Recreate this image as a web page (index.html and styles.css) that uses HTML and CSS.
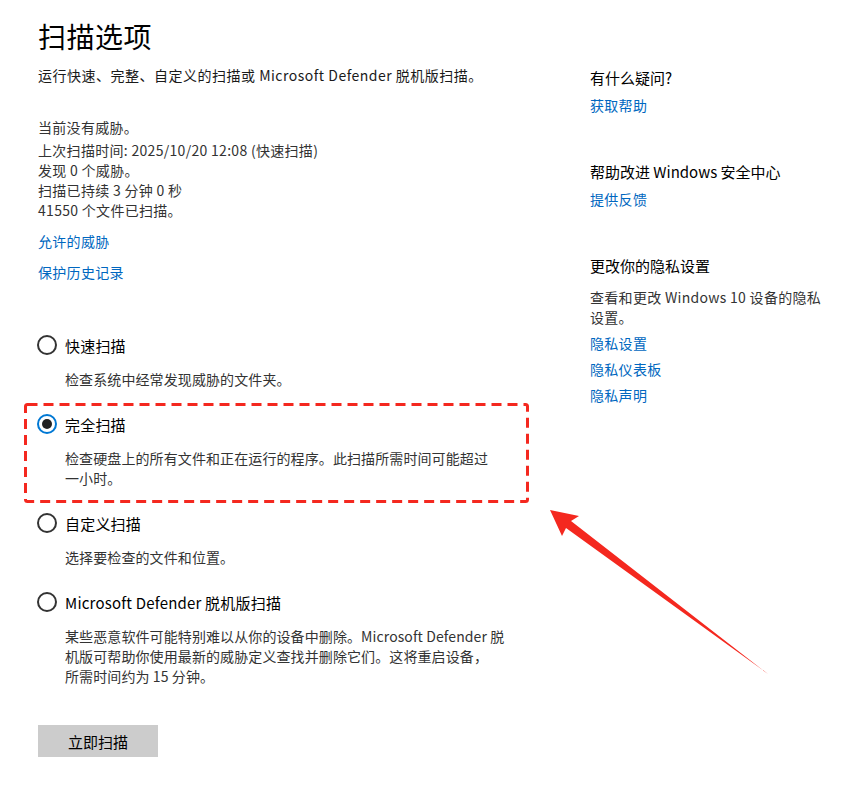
FILE: index.html
```html
<!DOCTYPE html>
<html lang="zh-CN">
<head>
<meta charset="utf-8">
<title>扫描选项</title>
<link rel="stylesheet" href="styles.css">
</head>
<body>
<div class="page">
  <main class="main">
    <h1 class="title">扫描选项</h1>
    <p class="subtitle">运行快速、完整、自定义的扫描或 Microsoft Defender 脱机版扫描。</p>

    <div class="status">
      <p class="status-first">当前没有威胁。</p>
      <p>上次扫描时间: 2025/10/20 12:08 (快速扫描)</p>
      <p>发现 0 个威胁。</p>
      <p>扫描已持续 3 分钟 0 秒</p>
      <p>41550 个文件已扫描。</p>
    </div>

    <div class="links">
      <a class="link" href="#">允许的威胁</a>
      <a class="link" href="#">保护历史记录</a>
    </div>

    <div class="options">
      <div class="option">
        <div class="option-row"><span class="radio"></span><span class="option-label">快速扫描</span></div>
        <p class="option-desc">检查系统中经常发现威胁的文件夹。</p>
      </div>
      <div class="option">
        <div class="option-row"><span class="radio radio-checked"></span><span class="option-label">完全扫描</span></div>
        <p class="option-desc">检查硬盘上的所有文件和正在运行的程序。此扫描所需时间可能超过<br>一小时。</p>
      </div>
      <div class="option">
        <div class="option-row"><span class="radio"></span><span class="option-label">自定义扫描</span></div>
        <p class="option-desc">选择要检查的文件和位置。</p>
      </div>
      <div class="option">
        <div class="option-row"><span class="radio"></span><span class="option-label">Microsoft Defender 脱机版扫描</span></div>
        <p class="option-desc">某些恶意软件可能特别难以从你的设备中删除。Microsoft Defender 脱<br>机版可帮助你使用最新的威胁定义查找并删除它们。这将重启设备，<br>所需时间约为 15 分钟。</p>
      </div>
    </div>

    <button class="scan-btn" type="button">立即扫描</button>
  </main>

  <aside class="side">
    <section class="side-block">
      <h2 class="side-title">有什么疑问?</h2>
      <a class="link" href="#">获取帮助</a>
    </section>
    <section class="side-block">
      <h2 class="side-title">帮助改进 Windows 安全中心</h2>
      <a class="link" href="#">提供反馈</a>
    </section>
    <section class="side-block">
      <h2 class="side-title">更改你的隐私设置</h2>
      <p class="side-text">查看和更改 Windows 10 设备的隐私设置。</p>
      <a class="link link-tight" href="#">隐私设置</a>
      <a class="link link-tight" href="#">隐私仪表板</a>
      <a class="link link-tight" href="#">隐私声明</a>
    </section>
  </aside>

  <svg class="annotation" width="842" height="786" viewBox="0 0 842 786" aria-hidden="true">
    <rect x="25.5" y="404.5" width="502" height="97" rx="2" ry="2" fill="none" stroke="#f4281f" stroke-width="3" stroke-dasharray="10 6"/>
    <polygon points="550,510 579,516 571,521 768,674 566,528 562,536" fill="#f4281f"/>
  </svg>
</div>
</body>
</html>
```

FILE: styles.css
```css
* { box-sizing: border-box; }

html, body {
  margin: 0;
  padding: 0;
  background: #ffffff;
}

body {
  font-family: "Noto Sans CJK SC", "Noto Sans", sans-serif;
  font-size: 14px;
  color: #000;
}

p, h1, h2 { margin: 0; font-weight: normal; }

.page {
  position: relative;
  width: 842px;
  height: 786px;
  display: flex;
  padding-left: 38px;
}

.main {
  width: 510px;
  padding-top: 16px;
  display: flex;
  flex-direction: column;
  align-items: flex-start;
}

.title {
  font-size: 28px;
  line-height: 40px;
  color: #000;
  letter-spacing: 0.5px;
}

.subtitle {
  margin-top: 9px;
  line-height: 20px;
  color: #1a1a1a;
  letter-spacing: 0.5px;
}

.status {
  margin-top: 32px;
  color: #333;
  line-height: 20px;
  letter-spacing: 0.3px;
}

.status-first { margin-bottom: 3px; }

.links {
  margin-top: 11px;
  display: flex;
  flex-direction: column;
  gap: 11px;
}

.link {
  display: block;
  color: #0067c0;
  text-decoration: none;
  line-height: 20px;
  letter-spacing: 0.3px;
}

.options {
  margin-top: 51px;
  display: flex;
  flex-direction: column;
  gap: 23px;
}

.option-row {
  display: flex;
  align-items: center;
  height: 24px;
  margin-left: -1px;
  gap: 8px;
}

.radio {
  width: 20px;
  height: 20px;
  border-radius: 50%;
  border: 2px solid #333;
  display: flex;
  align-items: center;
  justify-content: center;
  flex: none;
}

.radio-checked {
  border-color: #0078d4;
}

.radio-checked::after {
  content: "";
  width: 10px;
  height: 10px;
  border-radius: 50%;
  background: #222;
}

.option-label {
  font-size: 15px;
  color: #000;
  letter-spacing: 0.2px;
}

.option-desc {
  margin-top: 12px;
  margin-left: 27px;
  width: 470px;
  white-space: nowrap;
  line-height: 20px;
  color: #333;
  letter-spacing: 0.1px;
}

.scan-btn {
  margin-top: 39px;
  width: 120px;
  height: 32px;
  border: none;
  background: #cccccc;
  font-family: inherit;
  font-size: 15px;
  color: #000;
  padding: 0;
}

.side {
  margin-left: 42px;
  width: 250px;
  padding-top: 68px;
  display: flex;
  flex-direction: column;
  gap: 47px;
}

.side-title {
  font-size: 15px;
  line-height: 20px;
  color: #000;
  margin-bottom: 7px;
}

.side-text {
  margin-top: 11px;
  margin-bottom: 1px;
  line-height: 20px;
  color: #333;
  width: 245px;
  letter-spacing: 0.3px;
}

.link-tight { margin-top: 6px; }

.annotation {
  position: absolute;
  left: 0;
  top: 0;
  pointer-events: none;
}
```
